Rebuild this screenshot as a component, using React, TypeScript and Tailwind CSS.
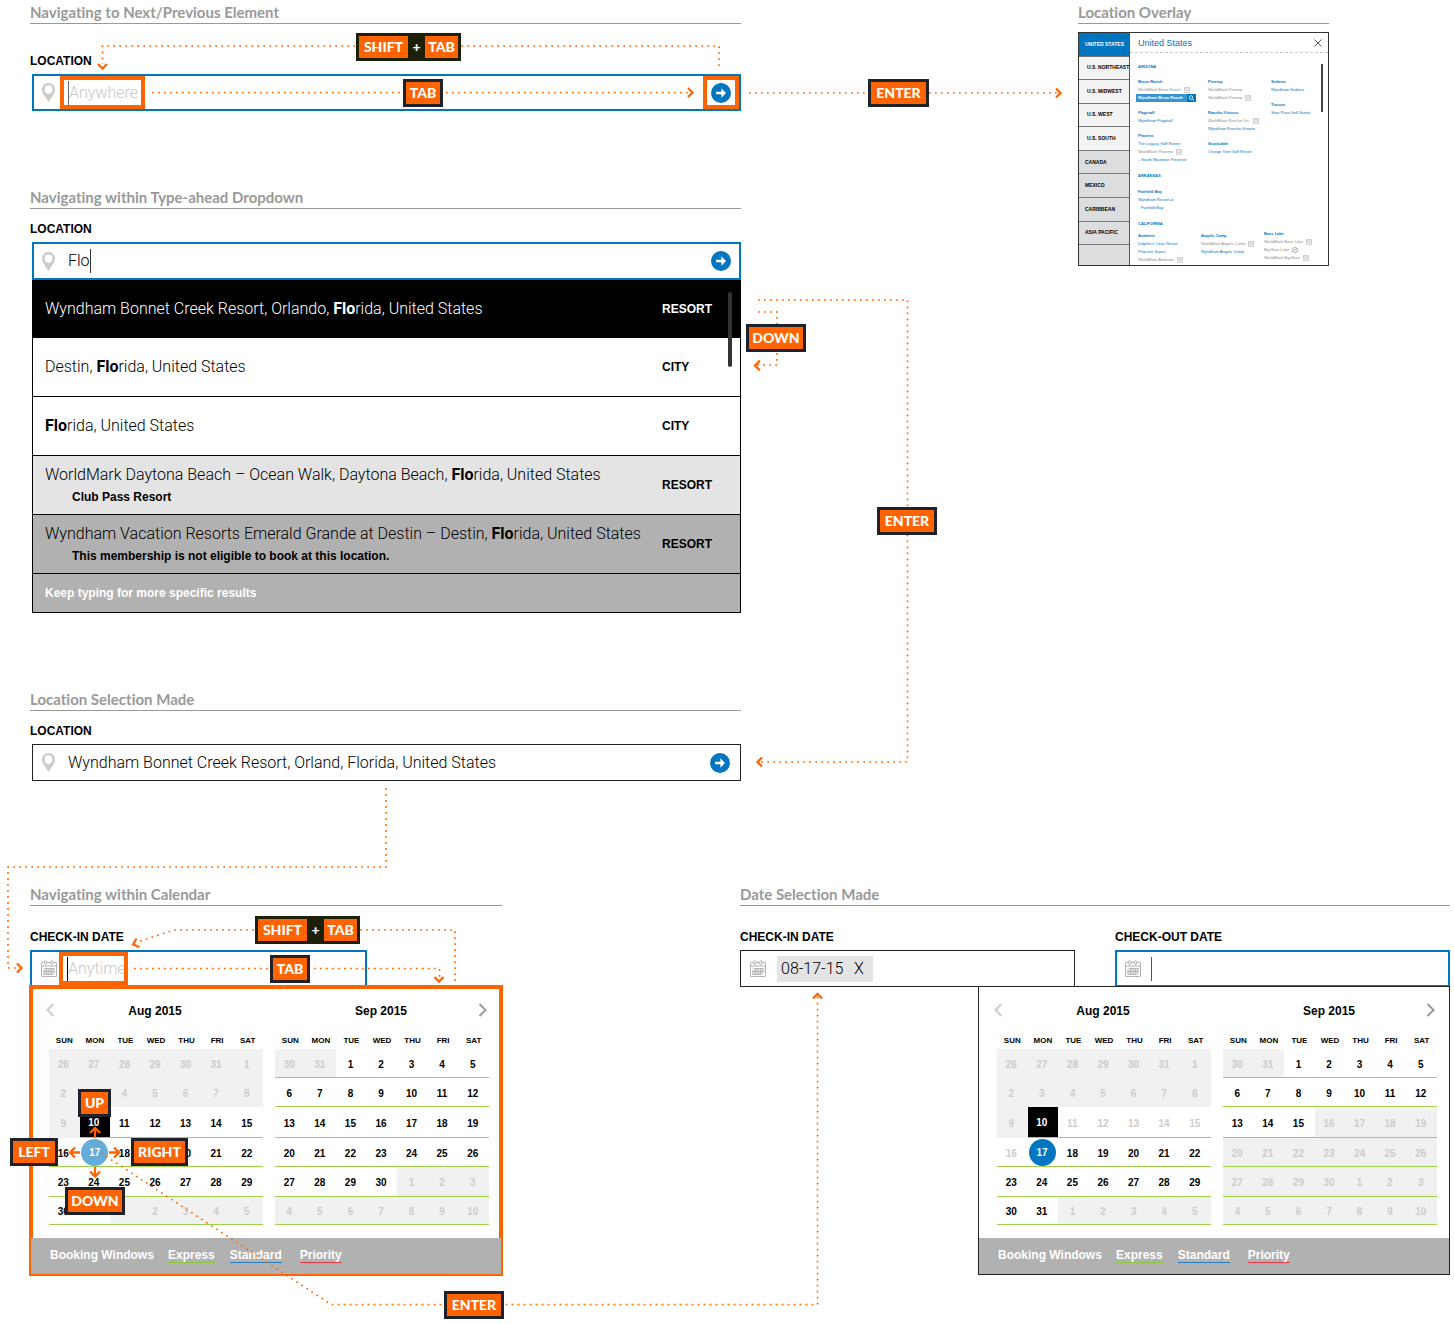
import { Fragment, type ReactNode } from "react";

const SANS = "font-['Liberation_Sans',Arial,sans-serif]";
const LIGHT = "font-[Roboto,'Liberation_Sans',sans-serif] font-light";
const TITLE = "font-[Lato,'Open_Sans',sans-serif] [font-variant-ligatures:none]";

/* ---------- icons ---------- */

function PinIcon() {
  return (
    <svg viewBox="0 0 13 19" className="h-[19px] w-[13px] shrink-0" aria-hidden="true">
      <path
        fill="#cbcbcb"
        fillRule="evenodd"
        d="M6.5 0C2.9 0 0 2.9 0 6.5c0 1.9.7 3.3 1.6 5L6.5 19l4.9-7.500c.9-1.700 1.600-3.100 1.600-5C13 2.900 10.100 0 6.500 0zm0 2.300a3.900 4.300 0 1 1 0 8.600 3.900 4.300 0 0 1 0-8.600z"
      />
    </svg>
  );
}

function CalendarIcon() {
  return (
    <svg viewBox="0 0 16 18" className="h-[18px] w-4 shrink-0" fill="none" stroke="#b3b3b3" aria-hidden="true">
      <rect x="0.5" y="2.5" width="15" height="14" rx="0.5" />
      <path d="M0.500 6H15.500" />
      <ellipse cx="4.700" cy="2.600" rx="1.200" ry="2.100" fill="#fff" />
      <ellipse cx="10.700" cy="2.600" rx="1.200" ry="2.100" fill="#fff" />
      <path d="M7 2.500h1.500" />
      <rect x="2.500" y="8.500" width="11" height="6" fill="#e2e2e2" stroke="none" />
      <path strokeWidth="0.900" d="M4 8.500H13.500M2.500 11.500H13.500M2.500 14.500H12M3 10V14.500M5.500 8.500V14.500M8 8.500V14.500M10.500 8.500V14.500M13 8.500V13" />
    </svg>
  );
}

function GoIcon() {
  return (
    <svg viewBox="0 0 20 20" className="size-5" aria-hidden="true">
      <circle cx="10" cy="10" r="10" fill="#0076c0" />
      <path d="M5 8.800h5.400V5.200L15 10l-4.600 4.800v-3.600H5z" fill="#fff" />
    </svg>
  );
}

function Chevron({ dir }: { dir: "left" | "right" }) {
  return (
    <svg viewBox="0 0 9 14" className="h-[14px] w-[9px]" fill="none" strokeWidth="2" aria-hidden="true">
      {dir === "left" ? (
        <path d="M7.500 1L1.500 7l6 6" stroke="#cccccc" />
      ) : (
        <path d="M1.500 1l6 6-6 6" stroke="#999999" />
      )}
    </svg>
  );
}

/* ---------- shared parts ---------- */

function Title({ children }: { children: ReactNode }) {
  return (
    <h2 className={`${TITLE} border-b border-[#999] pb-[3px] text-[15px] leading-4 font-bold whitespace-nowrap text-[#999]`}>
      {children}
    </h2>
  );
}

function FieldLabel({ id, children }: { id: string; children: ReactNode }) {
  return (
    <label htmlFor={id} className="mb-[5px] block pt-px text-[12px] leading-4 font-bold">
      {children}
    </label>
  );
}

function GoButton() {
  return (
    <button type="button" aria-label="Open location list" className="flex h-full w-[37px] items-center justify-center">
      <GoIcon />
    </button>
  );
}

const INPUT = `${LIGHT} min-w-0 bg-transparent text-[16px] leading-5 outline-none placeholder:text-[#c8c8c8] placeholder:opacity-100`;

/* ---------- type-ahead ---------- */

type Result = { before: string; after: string; type: string; note?: string; look: string };

const results: Result[] = [
  { before: "Wyndham Bonnet Creek Resort, Orlando, ", after: "rida, United States", type: "RESORT", look: "h-[58px] bg-black text-white" },
  { before: "Destin, ", after: "rida, United States", type: "CITY", look: "h-[59px] bg-white" },
  { before: "", after: "rida, United States", type: "CITY", look: "h-[59px] bg-white" },
  { before: "WorldMark Daytona Beach – Ocean Walk, Daytona Beach, ", after: "rida, United States", type: "RESORT", note: "Club Pass Resort", look: "h-[59px] bg-[#e4e4e4]" },
  { before: "Wyndham Vacation Resorts Emerald Grande at Destin – Destin, ", after: "rida, United States", type: "RESORT", note: "This membership is not eligible to book at this location.", look: "h-[59px] bg-[#b1b1b1]" },
];

function Typeahead() {
  return (
    <div className="relative ml-0.5 border-x border-b border-black">
      <ul>
        {results.map((r, i) => (
          <li key={i} className={`flex items-center border-b border-black pl-3 ${r.look}`}>
            <div className="flex-1 whitespace-nowrap">
              <p className={`${LIGHT} text-[16px] leading-5`}>
                {r.before}
                <b className="font-bold">Flo</b>
                {r.after}
              </p>
              {r.note && <p className="mt-1 pl-[27px] text-[12px] leading-4 font-bold">{r.note}</p>}
            </div>
            <span className="w-[78px] text-[12px] font-bold">{r.type}</span>
          </li>
        ))}
      </ul>
      <p className="bg-[#b1b1b1] py-[11px] pl-3 text-[12px] leading-4 font-bold text-white">
        Keep typing for more specific results
      </p>
      <div className="absolute top-3 right-2 h-[75px] w-1 rounded-full bg-[#333]" />
    </div>
  );
}

/* ---------- calendar ---------- */

type Look = "out" | "off" | "on" | "today" | "picked" | "pickedSoft" | "coveredOut" | "coveredOn";
type Week = { h: string; days: [string, Look, boolean][] };

const rowHeights = ["h-[29px]", "h-[29px]", "h-[31px]", "h-[29px]", "h-[30px]", "h-[28px]"];

/*
 * Seven codes per week: x greyed cell, o faded, n open, t today, p picked, s picked (light),
 * X greyed and N open for days that sit entirely behind a key cap.
 */
function weeks(numbers: number[], codes: string, firstLined: number): Week[] {
  const looks: Record<string, Look> = {
    x: "out",
    o: "off",
    n: "on",
    t: "today",
    p: "picked",
    s: "pickedSoft",
    X: "coveredOut",
    N: "coveredOn",
  };
  return rowHeights.map((h, r) => ({
    h,
    days: numbers.slice(r * 7, r * 7 + 7).map((n, c) => {
      const i = r * 7 + c;
      return [String(n), looks[codes[i]], i >= firstLined];
    }),
  }));
}

const range = (a: number, b: number) => Array.from({ length: b - a + 1 }, (_, i) => a + i);
const august = [...range(26, 31), ...range(1, 31), ...range(1, 5)];
const september = [30, 31, ...range(1, 30), ...range(1, 10)];

const checkInAug = weeks(august, "xxxxxxx" + "xXxxxxx" + "xtnnnnn" + "nsnNnnn" + "nnnnnnn" + "nNXxxxx", 15);
const checkInSep = weeks(september, "xxnnnnn" + "nnnnnnn" + "nnnnnnn" + "nnnnnnn" + "nnnnxxx" + "xxxxxxx", 0);
const checkOutAug = weeks(august, "xxxxxxx" + "xxxxxxx" + "xtooooo" + "opnnnnn" + "nnnnnnn" + "nnxxxxx", 15);
const checkOutSep = weeks(september, "xxnnnnn" + "nnnnnnn" + "nnnxxxx" + "xxxxxxx" + "xxxxxxx" + "xxxxxxx", 0);

const cellLook: Record<Look, string> = {
  out: "bg-[#f1f1f1] text-[#ccc]",
  off: "text-[#ccc]",
  on: "text-black",
  today: "bg-black text-white",
  picked: "text-white",
  pickedSoft: "text-white",
  coveredOut: "bg-[#f1f1f1]",
  coveredOn: "text-black",
};

const dayLook: Record<Look, string> = {
  out: "w-full pt-0.5 pr-0.5",
  off: "w-full pt-0.5 pr-0.5",
  on: "w-full pt-0.5 pr-0.5",
  today: "w-full pr-0.5",
  picked: "ml-px size-[27px] rounded-full bg-[#0076c0]",
  pickedSoft: "mx-auto size-[27px] rounded-full bg-[#66acd9]",
  coveredOut: "invisible w-full",
  coveredOn: "invisible w-full",
};

function Month({ name, data }: { name: string; data: Week[] }) {
  return (
    <table className="w-full table-fixed border-collapse">
      <caption className="h-[46px] pt-4 pr-0.5 text-[12px] leading-4 font-bold">{name}</caption>
      <thead>
        <tr className="h-4">
          {["SUN", "MON", "TUE", "WED", "THU", "FRI", "SAT"].map((d) => (
            <th key={d} className="p-0 pb-px text-[8px] leading-3 font-bold">
              {d}
            </th>
          ))}
        </tr>
      </thead>
      <tbody>
        {data.map((w, r) => (
          <tr key={r} className={w.h}>
            {w.days.map(([n, look, lined], c) => (
              <td key={c} className={`p-0 text-center align-middle ${cellLook[look]} ${lined ? "shadow-[inset_0_-1px_0_#9fd14b]" : ""}`}>
                <button type="button" className={`block text-center text-[10px] leading-4 font-bold ${dayLook[look]}`}>
                  {n}
                </button>
              </td>
            ))}
          </tr>
        ))}
      </tbody>
    </table>
  );
}

function Calendar({ aug, sep, className }: { aug: Week[]; sep: Week[]; className: string }) {
  return (
    <div className={`relative border bg-white ${className}`}>
      <div className="grid grid-cols-2 gap-3 pr-3 pb-[13px] pl-[18px]">
        <Month name="Aug 2015" data={aug} />
        <Month name="Sep 2015" data={sep} />
      </div>
      <button type="button" aria-label="Previous month" className="absolute top-4 left-[15px]">
        <Chevron dir="left" />
      </button>
      <button type="button" aria-label="Next month" className="absolute top-4 right-[14px]">
        <Chevron dir="right" />
      </button>
      <div className="flex h-9 items-center bg-[#b1b1b1] pb-0.5 pl-[19px] text-[12px] leading-[14px] font-bold text-white">
        <span className="w-[118px]">Booking Windows</span>
        <span className="mr-[15px] border-b border-[#8cc63f]">Express</span>
        <span className="mr-[18px] border-b border-[#2a7fc0]">Standard</span>
        <span className="border-b border-[#ee3a43]">Priority</span>
      </div>
    </div>
  );
}

/* ---------- location overlay ---------- */

const regions = ["UNITED STATES", "U.S. NORTHEAST", "U.S. MIDWEST", "U.S. WEST", "U.S. SOUTH", "CANADA", "MEXICO", "CARIBBEAN", "ASIA PACIFIC", ""];

/* Leading mark: "#" town, "-" unavailable, "-+" unavailable with info card, "-o" unavailable with a stop sign, "*" highlighted. */
function Places({ groups }: { groups: string[][] }) {
  return (
    <div className="flex flex-col gap-[7px]">
      {groups.map((g, i) => (
        <ul key={i}>
          {g.map((line, j) => {
            if (line.startsWith("#")) return <li key={j} className="font-bold">{line.slice(1)}</li>;
            if (line.startsWith("*"))
              return (
                <li key={j} className="-ml-0.5 flex w-[60px] items-center justify-between bg-[#3a94d0] pl-0.5 font-bold text-white">
                  {line.slice(1)}
                  <svg viewBox="0 0 9 8" className="h-2 w-[9px] bg-[#0076c0]" fill="none" stroke="#fff" aria-hidden="true">
                    <circle cx="4" cy="3.500" r="1.800" strokeWidth="0.800" />
                    <path d="M5.400 5l1.600 1.600" />
                  </svg>
                </li>
              );
            if (line.startsWith("-")) {
              const mark = line[1];
              const text = mark === "+" || mark === "o" ? line.slice(2) : line.slice(1);
              return (
                <li key={j} className="flex items-center gap-[3px] text-[#8c8c8c]">
                  {text}
                  {mark === "+" && (
                    <svg viewBox="0 0 6 6" className="size-1.5" fill="none" stroke="#b5b5b5" strokeWidth="0.700" aria-hidden="true">
                      <path d="M0.400 0.600h5.200v4.800H0.400zM0.400 2h5.200M1.500 3.600h3" />
                    </svg>
                  )}
                  {mark === "o" && (
                    <svg viewBox="0 0 6 6" className="size-1.5" fill="none" stroke="#8c8c8c" strokeWidth="0.700" aria-hidden="true">
                      <circle cx="3" cy="3" r="2.500" />
                      <path d="M1.300 4.700l3.400-3.400" />
                    </svg>
                  )}
                </li>
              );
            }
            return <li key={j} className={line.startsWith(">") ? "pl-[3px]" : ""}>{line.replace(">", "")}</li>;
          })}
        </ul>
      ))}
    </div>
  );
}

function LocationOverlay() {
  return (
    <div className="mt-2 flex h-[234px] border border-[#333]">
      <nav className="flex w-[51px] shrink-0 flex-col border-r border-[#555]">
        {regions.map((r, i) => (
          <button
            key={i}
            type="button"
            aria-label={r || "More regions"}
            className={`text-left text-[5px] leading-none font-bold whitespace-nowrap ${i < 9 ? "flex-1 border-b border-[#777]" : "h-5"} ${
              i === 0 ? "bg-[#0076c0] pl-1.5 text-white" : i < 5 ? "bg-[#f2f3f2] pl-2" : "bg-[#dcdddf] pl-1.5"
            }`}
          >
            {r}
          </button>
        ))}
      </nav>
      <div className="relative min-w-0 flex-1 overflow-hidden pl-2 text-[4px] leading-[8px] whitespace-nowrap text-[#0076c0]">
        <h3 className="-ml-2 h-5 border-b border-dashed border-[#ccc] pl-2 text-[9px] leading-5">United States</h3>
        <button type="button" aria-label="Close" className="absolute top-1.5 right-1.5">
          <svg viewBox="0 0 8 8" className="size-2" fill="none" stroke="#444" strokeWidth="0.900" aria-hidden="true">
            <path d="M0.500 0.500l7 7M7.500 0.500l-7 7" />
          </svg>
        </button>
        <div className="absolute top-[31px] right-[5px] h-12 w-0.5 bg-[#444]" />
        <h4 className="mt-2.5 mb-[7px] font-bold">ARIZONA</h4>
        <div className="grid grid-cols-[70px_63px_1fr]">
          <Places
            groups={[
              ["#Bison Ranch", "-+WorldMark Bison Ranch", "*Wyndham Bison Ranch"],
              ["#Flagstaff", "Wyndham Flagstaff"],
              ["#Phoenix", "The Legacy Golf Resort", "-+WorldMark Phoenix", "– South Mountain Preserve"],
            ]}
          />
          <Places
            groups={[
              ["#Pinetop", "-WorldMark Pinetop", "-+WorldMark Pinetop"],
              ["#Rancho Vistoso", "-+WorldMark Rancho Vis.", "Wyndham Rancho Vistoso"],
              ["#Scottsdale", "Orange Tree Golf Resort"],
            ]}
          />
          <Places groups={[["#Sedona", "Wyndham Sedona"], ["#Tucson", "Starr Pass Golf Suites"]]} />
        </div>
        <h4 className="my-2 font-bold">ARKANSAS</h4>
        <Places groups={[["#Fairfield Bay", "Wyndham Resort at", ">Fairfield Bay"]]} />
        <h4 className="mt-2 mb-1 font-bold">CALIFORNIA</h4>
        <div className="grid grid-cols-[63px_63px_1fr]">
          <Places groups={[["#Anaheim", "Dolphin's Cove Resort", "Peacock Suites", "-+WorldMark Anaheim"]]} />
          <Places groups={[["#Angels Camp", "-+WorldMark Angels Camp", "Wyndham Angels Camp"]]} />
          <div className="-mt-0.5">
            <Places groups={[["#Bass Lake", "-+WorldMark Bass Lake", "-oBig Bear Lake", "-+WorldMark Big Bear"]]} />
          </div>
        </div>
      </div>
    </div>
  );
}

/* ---------- annotations ---------- */

const dotted = [
  "M719 66V46H102.500V64",
  "M152 92.500H691",
  "M749 93H1059",
  "M758 312H777V365H757",
  "M758 300H907.500V762H759",
  "M386 788V867H8V968H19",
  "M455 981V930H174L137 942",
  "M134 968.500H439.500V979",
  "M101 1153L331 1304.500H817.500V997",
];

const heads = [
  "M98 64l4.500 4.500 4.500-4.500",
  "M688 88l4.500 4.500-4.500 4.500",
  "M1056 88.500l4.500 4.500-4.500 4.500",
  "M760 360.500l-5 5 5 5",
  "M762 757.500l-4.500 4.500 4.500 4.500",
  "M17 963.500l4.500 4.500-4.500 4.500",
  "M136.500 938.500l-3.500 6 6.500 2.500",
  "M434.500 977l4.500 4.500 4.500-4.500",
  "M813 998.500l4.500-4.500 4.500 4.500",
  "M95 1138v-9M90 1133l5-5 5 5",
  "M95 1167v9M90 1171.500l5 5 5-5",
  "M80 1152.500H70M75 1147.500l-5 5 5 5",
  "M109 1152.500h10M114 1147.500l5 5-5 5",
];

const keys: [string, string][] = [
  ["SHIFT + TAB", "left-[356px] top-[33px] w-[105px]"],
  ["TAB", "left-[403px] top-[79px] w-10"],
  ["ENTER", "left-[868px] top-[79px] w-[61px]"],
  ["DOWN", "left-[746px] top-[324px] w-[60px]"],
  ["ENTER", "left-[877px] top-[507px] w-[60px]"],
  ["SHIFT + TAB", "left-[255px] top-[916px] w-[105px]"],
  ["TAB", "left-[270px] top-[955px] w-10"],
  ["UP", "left-[78px] top-[1089px] w-[33px]"],
  ["LEFT", "left-[10px] top-[1138px] w-12"],
  ["RIGHT", "left-[131px] top-[1138px] w-[57px]"],
  ["DOWN", "left-[65px] top-[1187px] w-[60px]"],
  ["ENTER", "left-[444px] top-[1291px] w-[60px]"],
];

function Annotations() {
  return (
    <div className="pointer-events-none absolute inset-0">
      <svg className="absolute inset-0 h-full w-full" fill="none" stroke="#ff6400" aria-hidden="true">
        {dotted.map((d) => (
          <path key={d} d={d} strokeWidth="1.600" strokeDasharray="1.700 4.300" />
        ))}
        {heads.map((d) => (
          <path key={d} d={d} strokeWidth="2.300" />
        ))}
      </svg>
      {keys.map(([text, place], i) => {
        const parts = text.split(" + ");
        return (
          <kbd
            key={i}
            className={`${TITLE} absolute flex h-7 p-[3px] text-[14px] leading-[22px] font-black text-white ${
              parts.length > 1 ? "bg-[#1c2008]" : "bg-[#1f222b]"
            } ${place}`}
          >
            {parts.map((p, j) => (
              <Fragment key={p}>
                {j > 0 && <span className="w-[17px] text-center">+</span>}
                <span className={`bg-[#ff6400] text-center ${parts.length > 1 && j > 0 ? "w-[33px]" : "flex-1"}`}>{p}</span>
              </Fragment>
            ))}
          </kbd>
        );
      })}
    </div>
  );
}

/* ---------- page ---------- */

export default function App() {
  return (
    <main className={`${SANS} relative min-h-screen bg-white pt-1 pr-1 pb-12 pl-[30px] text-black`}>
      <div className="grid grid-cols-[711fr_337fr_251fr_121fr]">
        <div>
          <section>
            <Title>Navigating to Next/Previous Element</Title>
            <div className="mt-7">
              <FieldLabel id="loc-empty">LOCATION</FieldLabel>
              <div className="ml-0.5 flex h-[37px] items-center border-2 border-[#0076c0] pl-2">
                <PinIcon />
                <div className="ml-[5px] flex h-full w-[85px] items-center border-4 border-[#ff6400] pl-1">
                  <div className="h-6 w-px bg-[#666]" />
                  <input id="loc-empty" placeholder="Anywhere" className={`w-full ${INPUT}`} />
                </div>
                <div className="ml-auto h-full border-4 border-[#ff6400] [&>button]:w-7">
                  <GoButton />
                </div>
              </div>
            </div>
          </section>

          <section className="mt-[78px]">
            <Title>Navigating within Type-ahead Dropdown</Title>
            <div className="mt-[11px]">
              <FieldLabel id="loc-typing">LOCATION</FieldLabel>
              <div className="ml-0.5 flex h-[38px] items-center border-2 border-[#0076c0] pl-2">
                <PinIcon />
                <input id="loc-typing" defaultValue="Flo" className={`ml-[13px] w-[22px] ${INPUT}`} />
                <div className="h-6 w-px bg-[#333]" />
                <div className="ml-auto h-full">
                  <GoButton />
                </div>
              </div>
              <Typeahead />
            </div>
          </section>

          <section className="mt-[78px]">
            <Title>Location Selection Made</Title>
            <div className="mt-[11px]">
              <FieldLabel id="loc-chosen">LOCATION</FieldLabel>
              <div className="ml-0.5 flex h-[37px] items-center border border-[#222] pl-[9px]">
                <PinIcon />
                <input
                  id="loc-chosen"
                  defaultValue="Wyndham Bonnet Creek Resort, Orland, Florida, United States"
                  className={`ml-[13px] flex-1 ${INPUT}`}
                />
                <div className="h-full pr-0.5">
                  <GoButton />
                </div>
              </div>
            </div>
          </section>
        </div>

        <section className="col-start-3">
          <Title>Location Overlay</Title>
          <LocationOverlay />
        </section>
      </div>

      <div className="mt-[105px] grid grid-cols-[472fr_238fr_710fr]">
        <section>
          <Title>Navigating within Calendar</Title>
          <div className="mt-[22px]">
            <FieldLabel id="date-empty">CHECK-IN DATE</FieldLabel>
            <div className="flex h-[37px] w-[337px] items-center border-2 border-[#0076c0] pl-[9px]">
              <CalendarIcon />
              <div className="ml-0.5 flex h-full w-[69px] items-center border-4 border-[#ff6400] pl-1">
                <div className="h-6 w-px shrink-0 bg-black" />
                <input id="date-empty" placeholder="Anytime" className={`w-full ${INPUT}`} />
              </div>
            </div>
            <Calendar
              aug={checkInAug}
              sep={checkInSep}
              className="-mt-px border-[#ff6400] shadow-[0_0_0_1px_#ff6400,inset_0_0_0_2px_#ff6400]"
            />
          </div>
        </section>

        <section className="col-start-3">
          <Title>Date Selection Made</Title>
          <div className="mt-[22px] flex justify-between gap-10">
            <div className="flex-1">
              <FieldLabel id="date-in">CHECK-IN DATE</FieldLabel>
              <div className="flex h-[37px] items-center border border-[#222] pl-[9px]">
                <CalendarIcon />
                <div className="ml-[11px] flex h-[26px] w-24 items-center bg-[#e4e4e4] pl-1">
                  <input id="date-in" defaultValue="08-17-15" className={`w-[73px] ${INPUT}`} />
                  <button type="button" aria-label="Clear check-in date" className={`${LIGHT} text-[16px] leading-5`}>
                    X
                  </button>
                </div>
              </div>
            </div>
            <div className="flex-1">
              <FieldLabel id="date-out">CHECK-OUT DATE</FieldLabel>
              <div className="flex h-[37px] items-center border-2 border-[#0076c0] pl-2">
                <CalendarIcon />
                <div className="ml-2.5 h-6 w-px bg-[#555]" />
                <input id="date-out" className={`flex-1 ${INPUT}`} />
              </div>
            </div>
          </div>
          <Calendar aug={checkOutAug} sep={checkOutSep} className="-mt-px ml-auto w-[472px] border-[#222]" />
        </section>
      </div>

      <Annotations />
    </main>
  );
}
